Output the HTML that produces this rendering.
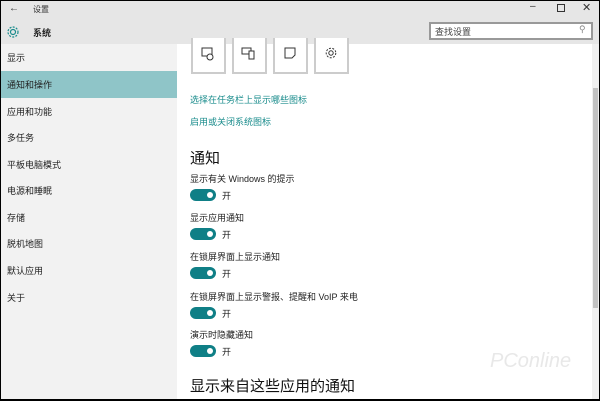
<!DOCTYPE html>
<html><head><meta charset="utf-8"><style>
*{margin:0;padding:0;box-sizing:border-box}
body{width:600px;height:401px;overflow:hidden;position:relative;background:#fff;font-family:"Liberation Sans","Noto Sans CJK SC",sans-serif;color:#000}
.a{position:absolute;white-space:nowrap}
.hdr{left:0;top:0;width:600px;height:44px;background:#e6e6e6}
.side{left:0;top:44px;width:177px;height:357px;background:#f2f2f2}
.si{left:7px;font-size:9px;color:#222}
.sel{left:0;top:71px;width:177px;height:27px;background:#8fc5c8}
.btn{top:38px;width:35px;height:36px;border:2px solid #ccc;border-top:none;background:#fff}
.lnk{font-size:9px;color:#1a8c8c;left:190px}
.lbl{font-size:9px;color:#222;left:190px}
.tg{left:190px;width:26px;height:12px;border-radius:6px;background:#0f7f86}
.tg:after{content:"";position:absolute;right:3px;top:3px;width:6px;height:6px;border-radius:3px;background:#fff}
.on{left:222px;font-size:9px;color:#222}
</style></head><body>
<div class="a hdr"></div>
<div class="a" style="left:9px;top:3px;font-size:10px;color:#333">←</div>
<div class="a" style="left:33px;top:4px;font-size:8px;color:#333">设置</div>
<div class="a" style="left:530px;top:1px;font-size:10px;color:#333">–</div>
<div class="a" style="left:557px;top:4px;width:8px;height:8px;border:1px solid #333"></div>
<div class="a" style="left:582px;top:1px;font-size:11px;color:#333">✕</div>
<svg class="a" style="left:6px;top:25px" width="14" height="14" viewBox="0 0 14 14"><circle cx="7" cy="7" r="2.5" fill="none" stroke="#1a8c8c" stroke-width="1.2"/><circle cx="7" cy="7" r="5" fill="none" stroke="#1a8c8c" stroke-width="1.2" stroke-dasharray="2 1.3"/></svg>
<div class="a" style="left:33px;top:26px;font-size:9px;font-weight:bold;color:#222">系统</div>
<div class="a" style="left:429px;top:22px;width:164px;height:18px;border:2px solid #999;background:#fff"></div>
<div class="a" style="left:435px;top:25px;font-size:9px;color:#444">查找设置</div>
<div class="a" style="left:579px;top:24px;font-size:9px;color:#888">⚲</div>
<div class="a side"></div>
<div class="a sel"></div>
<div class="a si" style="top:51px">显示</div>
<div class="a si" style="top:78px">通知和操作</div>
<div class="a si" style="top:105px">应用和功能</div>
<div class="a si" style="top:131px">多任务</div>
<div class="a si" style="top:158px">平板电脑模式</div>
<div class="a si" style="top:184px">电源和睡眠</div>
<div class="a si" style="top:211px">存储</div>
<div class="a si" style="top:237px">脱机地图</div>
<div class="a si" style="top:264px">默认应用</div>
<div class="a si" style="top:291px">关于</div>
<div class="a btn" style="left:191px"><svg width="31" height="34" viewBox="0 0 31 34"><rect x="9" y="10" width="10" height="8" fill="none" stroke="#333"/><circle cx="17" cy="19" r="3" fill="#fff" stroke="#333"/></svg></div>
<div class="a btn" style="left:232px"><svg width="31" height="34" viewBox="0 0 31 34"><rect x="8" y="10" width="9" height="6" fill="none" stroke="#333"/><rect x="15" y="13" width="5" height="8" fill="#fff" stroke="#333"/></svg></div>
<div class="a btn" style="left:273px"><svg width="31" height="34" viewBox="0 0 31 34"><path d="M10 10h10v7l-3 3h-7z" fill="none" stroke="#333"/></svg></div>
<div class="a btn" style="left:314px"><svg width="31" height="34" viewBox="0 0 31 34"><circle cx="15" cy="15" r="2.2" fill="none" stroke="#333"/><circle cx="15" cy="15" r="4.8" fill="none" stroke="#333" stroke-dasharray="2 1.4"/></svg></div>
<div class="a lnk" style="top:93px">选择在任务栏上显示哪些图标</div>
<div class="a lnk" style="top:115px">启用或关闭系统图标</div>
<div class="a" style="left:190px;top:147px;font-size:15px;color:#111">通知</div>
<div class="a lbl" style="top:172px">显示有关 Windows 的提示</div>
<div class="a tg" style="top:189px"></div><div class="a on" style="top:189px">开</div>
<div class="a lbl" style="top:211px">显示应用通知</div>
<div class="a tg" style="top:228px"></div><div class="a on" style="top:228px">开</div>
<div class="a lbl" style="top:250px">在锁屏界面上显示通知</div>
<div class="a tg" style="top:267px"></div><div class="a on" style="top:267px">开</div>
<div class="a lbl" style="top:290px">在锁屏界面上显示警报、提醒和 VoIP 来电</div>
<div class="a tg" style="top:307px"></div><div class="a on" style="top:307px">开</div>
<div class="a lbl" style="top:328px">演示时隐藏通知</div>
<div class="a tg" style="top:345px"></div><div class="a on" style="top:345px">开</div>
<div class="a" style="left:190px;top:375px;font-size:15px;color:#111">显示来自这些应用的通知</div>
<div class="a" style="left:592px;top:44px;width:7px;height:356px;background:#f0f0f0"></div>
<div class="a" style="left:593px;top:88px;width:5px;height:220px;background:#c2c2c2"></div>
<div class="a" style="left:490px;top:350px;font-size:20px;color:#e8e8e8;font-style:italic">PConline</div>
<div class="a" style="left:0;top:0;width:600px;height:401px;border:1px solid #000;border-bottom-width:2px"></div>
</body></html>
